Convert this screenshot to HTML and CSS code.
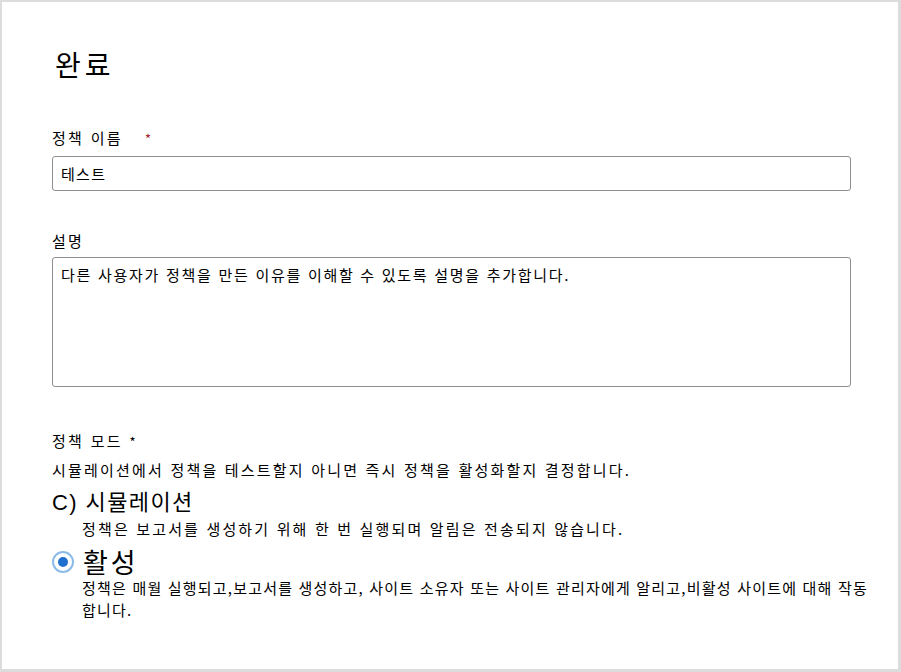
FILE: index.html
```html
<!DOCTYPE html>
<html lang="ko">
<head>
    <meta charset="utf-8">
    <title>정책 완료</title>
    <link rel="stylesheet" href="styles.css">
</head>
<body>
    <div class="frame">
        <h1 class="title">완료</h1>

        <label class="label" for="policy-name">정책 이름<span class="req">*</span></label>
        <input class="field" id="policy-name" type="text" value="테스트">

        <label class="label label-desc" for="policy-desc">설명</label>
        <textarea class="area" id="policy-desc">다른 사용자가 정책을 만든 이유를 이해할 수 있도록 설명을 추가합니다.</textarea>

        <div class="mode">
            <div class="label">정책 모드 <span class="req-dark">*</span></div>
            <p class="hint">시뮬레이션에서 정책을 테스트할지 아니면 즉시 정책을 활성화할지 결정합니다.</p>

            <div class="option-sim">C) 시뮬레이션</div>
            <p class="option-text sim-text">정책은 보고서를 생성하기 위해 한 번 실행되며 알림은 전송되지 않습니다.</p>

            <div class="option-active">
                <span class="radio"></span>
                <span class="option-name">활성</span>
            </div>
            <p class="option-text active-text">정책은 매월 실행되고,보고서를 생성하고, 사이트 소유자 또는 사이트 관리자에게 알리고,비활성 사이트에 대해 작동<br>합니다.</p>
        </div>
    </div>
</body>
</html>
```

FILE: styles.css
```css
html, body {
    margin: 0;
    background: #ffffff;
}
body {
    font-family: "Noto Sans CJK KR", "Noto Sans", sans-serif;
    color: #000000;
}
.frame {
    box-sizing: border-box;
    height: 672px;
    border: 2px solid #dcdcdc;
    border-right-width: 3px;
    border-bottom-width: 3px;
    padding: 44px 48px 0 50px;
}
.title {
    margin: 0 0 46px 3px;
    font-size: 28px;
    line-height: 36px;
    font-weight: normal;
    letter-spacing: 4px;
}
.label {
    display: block;
    font-size: 15px;
    line-height: 20px;
    letter-spacing: 2.3px;
}
.req {
    color: #a4262c;
    margin-left: 22px;
    font-size: 13px;
}
.req-dark {
    font-size: 13px;
}
.field,
.area {
    display: block;
    box-sizing: border-box;
    width: 799px;
    margin: 7px 0 0;
    border: 1px solid #8f8f8f;
    border-radius: 3px;
    font-family: inherit;
    font-size: 15px;
    color: #000000;
    background: #ffffff;
    outline: none;
}
.field {
    height: 35px;
    padding: 0 8px;
    letter-spacing: 1.3px;
}
.label-desc {
    margin-top: 40px;
}
.area {
    height: 130px;
    margin-top: 6px;
    padding: 7px 8px;
    line-height: 20px;
    letter-spacing: 1.72px;
    resize: none;
}
.mode {
    margin-top: 44px;
}
.hint {
    margin: 8px 0 0;
    font-size: 15px;
    line-height: 20px;
    letter-spacing: 2.2px;
}
.option-sim {
    margin-top: 9px;
    font-family: "Liberation Sans", "Noto Sans CJK KR", sans-serif;
    font-size: 22px;
    line-height: 28px;
    letter-spacing: 1.4px;
}
.option-text {
    margin: 0;
    padding-left: 30px;
    font-size: 15px;
    line-height: 22px;
}
.sim-text {
    margin-top: 1px;
    letter-spacing: 2.16px;
}
.option-active {
    display: flex;
    align-items: center;
    gap: 9px;
    margin-top: 7px;
    height: 30px;
}
.radio {
    box-sizing: border-box;
    width: 22px;
    height: 22px;
    border: 2px solid #8dbbe8;
    border-radius: 50%;
    display: flex;
    align-items: center;
    justify-content: center;
}
.radio::after {
    content: "";
    width: 10px;
    height: 10px;
    border-radius: 50%;
    background: #1f70cf;
}
.option-name {
    font-size: 27px;
    line-height: 30px;
    letter-spacing: 3px;
}
.active-text {
    white-space: nowrap;
    letter-spacing: 1.2px;
}
```
